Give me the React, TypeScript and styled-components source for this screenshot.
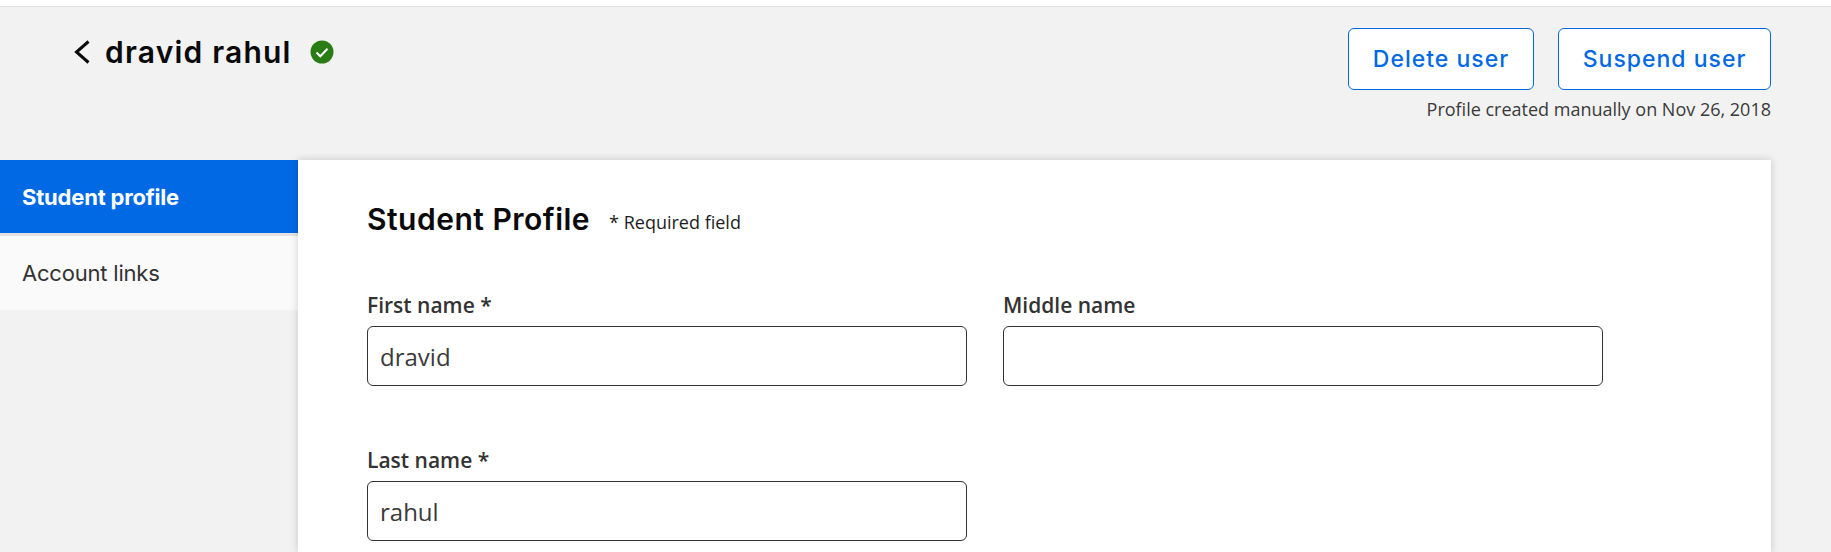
import React from 'react';
import styled, { createGlobalStyle } from 'styled-components';

const GlobalStyle = createGlobalStyle`
  html, body {
    margin: 0;
    height: 552px;
    overflow: hidden;
    background: #f2f2f2;
  }
  * {
    box-sizing: border-box;
  }
`;

const HEADING_FONT = `Inter, "Noto Sans", sans-serif`;
const BODY_FONT = `"Open Sans", "Noto Sans", sans-serif`;

const TopStrip = styled.div`
  height: 7px;
  background: #fff;
  border-bottom: 1px solid #e0e0e0;
`;
const Header = styled.header`
  height: 153px;
  padding: 21px 60px 0 74px;
  display: flex;
  justify-content: space-between;
  align-items: flex-start;
`;
const TitleRow = styled.div`
  display: flex;
  align-items: center;
  height: 48px;
`;
const BackLink = styled.a`
  display: flex;
  width: 31px;
  color: #0a0a0a;
`;
const Title = styled.h1`
  margin: 0 18px 0 0;
  font-family: ${HEADING_FONT};
  font-size: 30px;
  font-weight: 600;
  letter-spacing: 1.2px;
  color: #0a0a0a;
`;
const Actions = styled.div`
  display: flex;
  flex-direction: column;
  align-items: flex-end;
`;
const ButtonRow = styled.div`
  display: flex;
  gap: 24px;
`;
const OutlineButton = styled.button<{ $width: number }>`
  width: ${p => p.$width}px;
  height: 62px;
  background: #fff;
  border: 1px solid #0069e3;
  border-radius: 6px;
  color: #0069e3;
  font-family: ${HEADING_FONT};
  font-size: 23px;
  font-weight: 500;
  letter-spacing: 1px;
`;
const CreatedNote = styled.p`
  margin: 7px 0 0;
  font-family: ${BODY_FONT};
  font-size: 18px;
  line-height: 24px;
  color: #3a3a3a;
`;
const Body = styled.div`
  display: flex;
  padding-right: 60px;
`;
const Sidebar = styled.nav`
  width: 298px;
  flex: none;
  display: flex;
  flex-direction: column;
`;
const SideItem = styled.a<{ $active?: boolean }>`
  height: ${p => (p.$active ? 76 : 74)}px;
  display: flex;
  align-items: center;
  padding-left: 22px;
  font-family: ${HEADING_FONT};
  font-size: 22px;
  font-weight: ${p => (p.$active ? 700 : 400)};
  letter-spacing: -0.2px;
  color: ${p => (p.$active ? '#fff' : '#333')};
  background: ${p => (p.$active ? '#0069e3' : '#fafafa')};
  border-bottom: ${p => (p.$active ? '3px solid #e2e2e2' : 'none')};
`;
const Card = styled.main`
  flex: 1;
  height: 392px;
  padding: 36px 0 0 69px;
  background: #fff;
  box-shadow: 0 0 8px rgba(0, 0, 0, 0.18);
`;
const CardHeading = styled.div`
  display: flex;
  align-items: flex-start;
  gap: 19px;
  margin-bottom: 51px;
`;
const CardTitle = styled.h2`
  margin: 0;
  font-family: ${HEADING_FONT};
  font-size: 30px;
  font-weight: 600;
  letter-spacing: 0.5px;
  line-height: 46px;
  color: #0a0a0a;
`;
const RequiredNote = styled.span`
  margin-top: 14px;
  font-family: ${BODY_FONT};
  font-size: 18px;
  line-height: 24px;
  color: #1c1c1c;
`;
const FormGrid = styled.div`
  display: grid;
  grid-template-columns: 600px 600px;
  column-gap: 36px;
  row-gap: 62px;
`;
const Field = styled.label`
  display: flex;
  flex-direction: column;
  gap: 8px;
`;
const FieldLabel = styled.span`
  font-family: ${BODY_FONT};
  font-size: 21px;
  font-weight: 600;
  line-height: 25px;
  color: #333;
`;
const TextInput = styled.input`
  width: 100%;
  height: 60px;
  padding: 0 12px;
  border: 1px solid #333;
  border-radius: 6px;
  background: #fff;
  font-family: ${BODY_FONT};
  font-size: 24px;
  color: #3a3a3a;
  outline: none;
`;

const App: React.FC = () => {
  return (
    <>
      <GlobalStyle />
      <TopStrip />
      <Header>
        <TitleRow>
          <BackLink>
            <svg width="16" height="24" viewBox="0 0 16 24" fill="none" stroke="currentColor" strokeWidth="3">
              <path d="M14.5 1.5 2.5 12l12 10.5" />
            </svg>
          </BackLink>
          <Title>dravid rahul</Title>
          <svg width="24" height="24" viewBox="0 0 24 24">
            <circle cx="12" cy="12" r="11.5" fill="#2a7d14" />
            <path d="M6.5 12.5l3.8 3.8 7.2-7.6" fill="none" stroke="#fff" strokeWidth="2" />
          </svg>
        </TitleRow>
        <Actions>
          <ButtonRow>
            <OutlineButton $width={186}>Delete user</OutlineButton>
            <OutlineButton $width={213}>Suspend user</OutlineButton>
          </ButtonRow>
          <CreatedNote>Profile created manually on Nov 26, 2018</CreatedNote>
        </Actions>
      </Header>
      <Body>
        <Sidebar>
          <SideItem $active>Student profile</SideItem>
          <SideItem>Account links</SideItem>
        </Sidebar>
        <Card>
          <CardHeading>
            <CardTitle>Student Profile</CardTitle>
            <RequiredNote>* Required field</RequiredNote>
          </CardHeading>
          <FormGrid>
            <Field>
              <FieldLabel>First name *</FieldLabel>
              <TextInput readOnly value="dravid" />
            </Field>
            <Field>
              <FieldLabel>Middle name</FieldLabel>
              <TextInput readOnly value="" />
            </Field>
            <Field>
              <FieldLabel>Last name *</FieldLabel>
              <TextInput readOnly value="rahul" />
            </Field>
          </FormGrid>
        </Card>
      </Body>
    </>
  );
};

export default App;
